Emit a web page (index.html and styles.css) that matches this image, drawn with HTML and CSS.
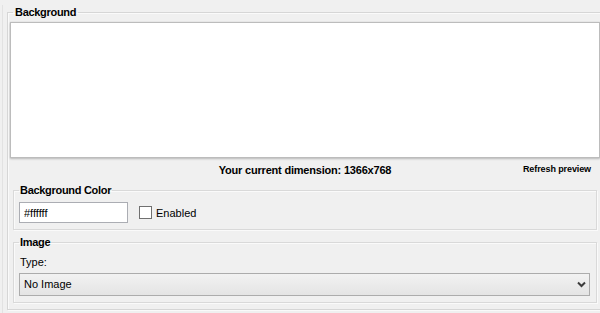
FILE: index.html
```html
<!DOCTYPE html>
<html>
<head>
<meta charset="utf-8">
<link rel="stylesheet" href="styles.css">
</head>
<body>
<div class="frame">
  <fieldset class="panel">
    <legend class="panel-title">Background</legend>
    <div class="preview"></div>
    <div class="status">
      <span></span>
      <span class="dimension">Your current dimension: 1366x768</span>
      <a class="refresh">Refresh preview</a>
    </div>
    <fieldset class="group">
      <legend class="group-title">Background Color</legend>
      <div class="color-row">
        <input class="color-input" type="text" value="#ffffff">
        <label class="check"><span class="box"></span>Enabled</label>
      </div>
    </fieldset>
    <fieldset class="group group-image">
      <legend class="group-title">Image</legend>
      <div class="type-label">Type:</div>
      <div class="select-wrap">
        <div class="select">No Image</div>
        <svg class="chevron" width="9" height="7" viewBox="0 0 9 7"><path d="M1 1.5 L4.5 5 L8 1.5" fill="none" stroke="#3c3c3c" stroke-width="2"/></svg>
      </div>
    </fieldset>
  </fieldset>
</div>
</body>
</html>
```

FILE: styles.css
```css
html, body {
  margin: 0;
  padding: 0;
  background: #f0f0f0;
  overflow: hidden;
  font-family: "Liberation Sans", Arial, sans-serif;
  font-size: 11px;
  color: #000;
}

.frame {
  margin-left: 2px;
  border-left: 1px solid #e2e2e2;
  padding-left: 4px;
  height: 313px;
  box-sizing: border-box;
}

.panel {
  margin: 5px -4px 0 0;
  padding: 3px 3px 6px 2px;
  border: 1px solid #d6d6d6;
  box-shadow: inset 1px 1px 0 #fafafa, 1px 1px 0 #fafafa;
  min-width: 0;
}

.panel-title {
  font-weight: bold;
  line-height: 14px;
  padding: 0 2px;
  margin-left: 3px;
  letter-spacing: -0.3px;
}

.preview {
  height: 134px;
  background: #fff;
  border: 1px solid #bcbcbc;
  box-shadow: 0 1px 2px rgba(0, 0, 0, 0.22), 0 0 1px rgba(0, 0, 0, 0.12);
}

.status {
  display: grid;
  grid-template-columns: 1fr auto 1fr;
  align-items: start;
  padding-top: 5px;
}

.dimension {
  font-weight: bold;
  line-height: 14px;
  letter-spacing: -0.2px;
}

.refresh {
  justify-self: end;
  margin-right: 9px;
  font-weight: bold;
  font-size: 9px;
  line-height: 12px;
  letter-spacing: -0.1px;
}

.group {
  margin: 6px 3px 0 3px;
  padding: 0 6px 6px 5px;
  border: 1px solid #d9d9d9;
  box-shadow: inset 1px 1px 0 #fafafa, 1px 1px 0 #fafafa;
  min-width: 0;
}

.group-image {
  margin-top: 5px;
}

.group-title {
  font-weight: bold;
  line-height: 14px;
  padding: 0 1px;
  letter-spacing: -0.3px;
}

.color-row {
  display: flex;
  align-items: center;
  margin-top: 5px;
}

.color-input {
  width: 109px;
  height: 21px;
  box-sizing: border-box;
  border: 1px solid #abadb3;
  padding: 0 4px;
  font-family: "Liberation Sans", Arial, sans-serif;
  font-size: 11px;
  color: #000;
  background: #fff;
  outline: none;
}

.check {
  display: flex;
  align-items: center;
  margin-left: 11px;
}

.box {
  width: 13px;
  height: 13px;
  box-sizing: border-box;
  border: 1px solid #707070;
  background: #fff;
  margin-right: 4px;
}

.type-label {
  margin-top: 6px;
  line-height: 14px;
  padding-left: 1px;
}

.select-wrap {
  position: relative;
  margin-top: 4px;
}

.select {
  height: 23px;
  box-sizing: border-box;
  border: 1px solid #acacac;
  background: linear-gradient(#f2f2f2, #e4e4e4);
  padding-left: 4px;
  line-height: 21px;
}

.chevron {
  position: absolute;
  right: 4px;
  top: 8px;
}
```
